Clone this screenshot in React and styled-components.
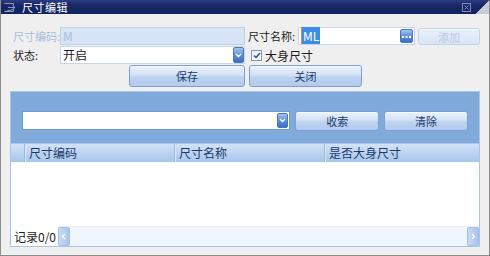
import React from 'react'
import styled, { createGlobalStyle } from 'styled-components'

const GlobalStyle = createGlobalStyle`
  html, body {
    margin: 0;
    padding: 0;
    background: #efefef;
  }
  * {
    box-sizing: border-box;
  }
`

const Window = styled.div`
  width: 490px;
  height: 256px;
  display: flex;
  flex-direction: column;
  background: #efefef;
  border: 1px solid #8c8c8c;
  border-top: none;
  font-family: "Noto Sans CJK SC", "Liberation Sans", sans-serif;
  font-size: 11px;
  color: #1c1c1c;
  overflow: hidden;
`

const TitleBar = styled.div`
  height: 14px;
  margin: 0 -1px;
  display: flex;
  align-items: center;
  background: linear-gradient(to bottom, #2a3b80 0%, #172867 40%, #14245f 100%);
  color: #fff;
  font-size: 11px;
  line-height: 14px;
`

const TitleIcon = styled.svg`
  margin: 0 6px 0 4px;
  flex: none;
`

const TitleText = styled.span`
  flex: 1;
  letter-spacing: 0.5px;
`

const CloseIcon = styled.svg`
  flex: none;
  margin-right: 5px;
`

const Corner = styled.div`
  width: 14px;
  height: 14px;
  flex: none;
  background: linear-gradient(to bottom right, transparent 50%, #c7ccd8 50%);
`

const Form = styled.div`
  padding: 13px 9px 0 9px;
  display: grid;
  grid-template-columns: 50px 185px 3px 50px 117px 3px 62px;
  grid-template-rows: 18px 18px 22px;
  row-gap: 1px;
  align-items: center;
`

const Label = styled.span`
  color: ${p => (p.disabled ? '#a8bedc' : '#1c1c1c')};
  white-space: nowrap;
  padding-left: ${p => p.$pad ?? 3}px;
  grid-column: ${p => p.$col};
`

const Field = styled.div`
  grid-column: ${p => p.$col};
  height: 18px;
  display: flex;
  align-items: center;
  border: 1px solid ${p => (p.disabled ? '#bcd0ea' : '#c4d5ec')};
  background: ${p => (p.disabled ? '#d6e4f5' : '#fff')};
  color: ${p => (p.disabled ? '#a9c0e0' : '#1c1c1c')};
  padding-left: 2px;
  font-size: 12px;
`

const FieldText = styled.span`
  flex: 1;
  line-height: 16px;
`

const Selected = styled.span`
  background: #3a8ee6;
  color: #fff;
  padding: 0 1px;
  border-left: 1px solid #e08a2c;
`

const DropButton = styled.div`
  width: ${p => p.$w || 11}px;
  height: ${p => p.$h || 16}px;
  flex: none;
  margin-right: ${p => p.$mr || 0}px;
  border-radius: 2px;
  background: linear-gradient(to bottom, #a2c3ee 0%, #5f92d8 50%, #3a6fc2 100%);
  border: 1px solid #4a77be;
  display: flex;
  align-items: center;
  justify-content: center;
`

const Button = styled.button`
  grid-column: ${p => p.$col || 'auto'};
  justify-self: ${p => p.$justify || 'stretch'};
  width: ${p => (p.$w ? `${p.$w}px` : 'auto')};
  height: ${p => p.$h || 22}px;
  margin-left: ${p => p.$ml || 0}px;
  padding: 0;
  font-family: inherit;
  font-size: 11px;
  border-radius: 3px;
  border: 1px solid ${p => (p.disabled ? '#c3d4ea' : '#7e9fd0')};
  background: ${p =>
    p.disabled
      ? 'linear-gradient(to bottom, #e9f0fa, #d9e5f5)'
      : 'linear-gradient(to bottom, #eaf2fc 0%, #d3e2f6 45%, #bcd2f0 55%, #b4cbee 100%)'};
  color: ${p => (p.disabled ? '#b6c9e4' : '#203a6a')};
  box-shadow: inset 0 1px 0 rgba(255, 255, 255, 0.7);
`

const CheckRow = styled.label`
  grid-column: 4 / 6;
  display: flex;
  align-items: center;
  gap: 3px;
  padding-left: 3px;
  font-size: 12px;
`

const CheckBox = styled.span`
  width: 11px;
  height: 11px;
  border: 1px solid #7b97c4;
  background: linear-gradient(to bottom right, #e6eef9, #fff);
  display: flex;
  align-items: center;
  justify-content: center;
`

const Panel = styled.div`
  margin: 4px 9px 0 9px;
  height: 156px;
  border: 1px solid #a9c5ea;
  display: flex;
  flex-direction: column;
  background: #fff;
`

const SearchBar = styled.div`
  height: 51px;
  background: #80aad9;
  display: flex;
  align-items: center;
  padding: 6px 11px 0 11px;
  gap: 5px;
`

const Combo = styled.div`
  width: 269px;
  height: 19px;
  background: #fff;
  border: 1px solid #6f9bd3;
  display: flex;
  justify-content: flex-end;
  padding: 1px;
`

const Header = styled.div`
  height: 19px;
  display: grid;
  grid-template-columns: 14px 150px 150px 1fr;
  background: linear-gradient(to bottom, #d3e3f7 0%, #bcd3f2 50%, #aac6ec 100%);
  border-top: 1px solid #a7c4ea;
  color: #203a66;
  font-size: 12px;
`

const HeaderCell = styled.div`
  border-right: ${p => (p.$last ? 'none' : '1px solid #97b8e3')};
  box-shadow: ${p => (p.$first ? 'none' : 'inset 1px 0 0 #dbe8f8')};
  padding-left: 4px;
  line-height: 18px;
`

const GridBody = styled.div`
  flex: 1;
  background: #fff;
`

const Footer = styled.div`
  height: 20px;
  display: flex;
  align-items: center;
  background: #fff;
  font-size: 12px;
`

const Records = styled.span`
  padding: 0 2px 0 3px;
  white-space: nowrap;
`

const ScrollTrack = styled.div`
  flex: 1;
  height: 20px;
  display: flex;
  justify-content: space-between;
  background: linear-gradient(to bottom, #f2f7fd, #edf4fc);
  border-top: 1px solid #e8f0fa;
`

const ScrollArrow = styled.div`
  width: 12px;
  height: 19px;
  border-radius: 2px;
  background: linear-gradient(to right, #c8dbf4, #a9c4ec);
  border: 1px solid #a3bfe6;
  display: flex;
  align-items: center;
  justify-content: center;
`

const Chevron = ({ dir = 'down' }) => {
  const d = {
    down: 'M1 1 L3.5 3.5 L6 1',
    left: 'M4 1 L1.5 3.5 L4 6',
    right: 'M2 1 L4.5 3.5 L2 6',
  }[dir]
  const size = dir === 'down' ? [7, 5] : [6, 7]
  return (
    <svg width={size[0]} height={size[1]} viewBox={`0 0 ${size[0]} ${size[1]}`}>
      <path d={d} stroke="#fff" strokeWidth="1.3" fill="none" />
    </svg>
  )
}

export default function App() {
  return (
    <>
      <GlobalStyle />
      <Window>
        <TitleBar>
          <TitleIcon width="12" height="9" viewBox="0 0 12 9">
            <path d="M0.5 0.5 H9.5 V2.5 M9.5 6.5 V8.5 H0.5 Z" stroke="#8d98c0" fill="none" />
            <path d="M4 4.5 H11 M8.5 2.5 L11 4.5 L8.5 6.5" stroke="#8d98c0" fill="none" />
          </TitleIcon>
          <TitleText>尺寸编辑</TitleText>
          <CloseIcon width="9" height="9" viewBox="0 0 9 9">
            <rect x="0.5" y="0.5" width="8" height="8" stroke="#7f8bb6" fill="none" />
            <path d="M2.5 2.5 L6.5 6.5 M6.5 2.5 L2.5 6.5" stroke="#7f8bb6" />
          </CloseIcon>
          <Corner />
        </TitleBar>

        <Form>
          <Label disabled $col="1">尺寸编码:</Label>
          <Field disabled $col="2">
            <FieldText>M</FieldText>
          </Field>
          <Label $col="4" $pad={0}>尺寸名称:</Label>
          <Field $col="5">
            <FieldText>
              <Selected>ML</Selected>
            </FieldText>
            <DropButton $w={13} $h={14} $mr={1}>
              <svg width="9" height="3" viewBox="0 0 9 3">
                <rect x="0" y="1" width="2" height="2" fill="#fff" />
                <rect x="3.5" y="1" width="2" height="2" fill="#fff" />
                <rect x="7" y="1" width="2" height="2" fill="#fff" />
              </svg>
            </DropButton>
          </Field>
          <Button disabled $col="7" $h={17}>添加</Button>

          <Label $col="1">状态:</Label>
          <Field $col="2">
            <FieldText>开启</FieldText>
            <DropButton>
              <Chevron />
            </DropButton>
          </Field>
          <CheckRow>
            <CheckBox>
              <svg width="8" height="7" viewBox="0 0 8 7">
                <path d="M1 3.5 L3 5.5 L7 1" stroke="#2d4f8c" strokeWidth="1.5" fill="none" />
              </svg>
            </CheckBox>
            大身尺寸
          </CheckRow>

          <Button $col="2" $justify="end" $w={116}>保存</Button>
          <Button $col="4 / 6" $justify="start" $w={113} $ml={1}>关闭</Button>
        </Form>

        <Panel>
          <SearchBar>
            <Combo>
              <DropButton $h={15}>
                <Chevron />
              </DropButton>
            </Combo>
            <Button $w={84} $h={20}>收索</Button>
            <Button $w={84} $h={20}>清除</Button>
          </SearchBar>
          <Header>
            <HeaderCell $first />
            <HeaderCell>尺寸编码</HeaderCell>
            <HeaderCell>尺寸名称</HeaderCell>
            <HeaderCell $last>是否大身尺寸</HeaderCell>
          </Header>
          <GridBody />
          <Footer>
            <Records>记录0/0</Records>
            <ScrollTrack>
              <ScrollArrow>
                <Chevron dir="left" />
              </ScrollArrow>
              <ScrollArrow>
                <Chevron dir="right" />
              </ScrollArrow>
            </ScrollTrack>
          </Footer>
        </Panel>
      </Window>
    </>
  )
}
